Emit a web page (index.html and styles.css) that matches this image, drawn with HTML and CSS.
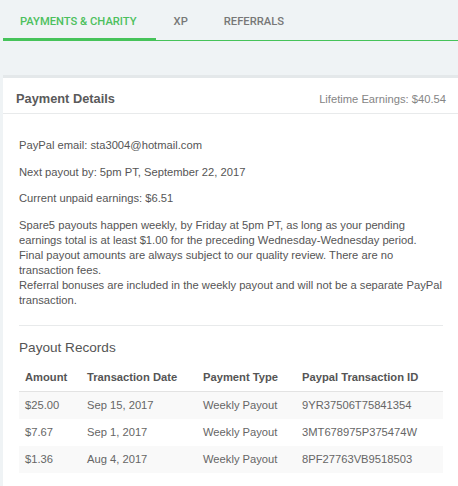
FILE: index.html
```html
<!DOCTYPE html>
<html>
<head>
<meta charset="utf-8">
<link rel="stylesheet" href="styles.css">
</head>
<body>
<nav class="tabs">
  <div class="tab active">PAYMENTS &amp; CHARITY</div>
  <div class="tab">XP</div>
  <div class="tab">REFERRALS</div>
</nav>
<section class="card">
  <header class="card-head">
    <h2 class="card-title">Payment Details</h2>
    <span class="lifetime">Lifetime Earnings: $40.54</span>
  </header>
  <div class="card-body">
    <p>PayPal email: sta3004@hotmail.com</p>
    <p>Next payout by: 5pm PT, September 22, 2017</p>
    <p>Current unpaid earnings: $6.51</p>
    <p class="last">Spare5 payouts happen weekly, by Friday at 5pm PT, as long as your pending earnings total is at least $1.00 for the preceding Wednesday-Wednesday period. Final payout amounts are always subject to our quality review. There are no transaction fees.<br>Referral bonuses are included in the weekly payout and will not be a separate PayPal transaction.</p>
    <hr class="divider">
    <h3 class="records-title">Payout Records</h3>
    <table class="records">
      <thead>
        <tr><th class="c1">Amount</th><th class="c2">Transaction Date</th><th class="c3">Payment Type</th><th class="c4">Paypal Transaction ID</th></tr>
      </thead>
      <tbody>
        <tr><td>$25.00</td><td>Sep 15, 2017</td><td>Weekly Payout</td><td>9YR37506T75841354</td></tr>
        <tr><td>$7.67</td><td>Sep 1, 2017</td><td>Weekly Payout</td><td>3MT678975P375474W</td></tr>
        <tr><td>$1.36</td><td>Aug 4, 2017</td><td>Weekly Payout</td><td>8PF27763VB9518503</td></tr>
      </tbody>
    </table>
  </div>
</section>
</body>
</html>
```

FILE: styles.css
```css
html, body {
  margin: 0;
  padding: 0;
  background: #eff3f5;
  height: 100%;
}
body {
  font-family: "Liberation Sans", Arial, sans-serif;
  font-size: 11.2px;
  color: #555;
  overflow: hidden;
}
.tabs {
  display: flex;
  height: 40px;
  margin-left: 3px;
  border-bottom: 1px solid #46c35a;
}
.tab {
  font-family: Roboto, "Liberation Sans", sans-serif;
  font-weight: 500;
  font-size: 11.2px;
  color: #777;
  height: 41px;
  box-sizing: border-box;
  padding: 1px 18px 0 18px;
  display: flex;
  align-items: center;
}
.tab.active {
  color: #4cc05d;
  border-bottom: 3px solid #46c35a;
  margin-bottom: -1px;
  padding: 4px 19px 0 17px;
}
.card {
  margin: 34px 0 0 3px;
  background: #fff;
  border-top: 3px solid #e4e8ea;
  min-height: 420px;
}
.card-head {
  display: flex;
  justify-content: space-between;
  align-items: baseline;
  padding: 11px 12px 4px 13px;
  border-bottom: 1px solid #e8eaeb;
}
.card-title {
  margin: 0;
  font-size: 12.8px;
  line-height: 20px;
  font-weight: bold;
  color: #5a5a5a;
}
.lifetime {
  color: #858585;
  font-size: 11.2px;
}
.card-body {
  padding: 24px 15px 0 16px;
}
.card-body p {
  margin: 0 0 11.5px;
  line-height: 15px;
}
.card-body p.last {
  margin-bottom: 0;
}
.divider {
  border: 0;
  border-top: 1px solid #e8eaeb;
  margin: 17.5px 0 12px;
}
.records-title {
  margin: 0 0 6px;
  font-size: 13.6px;
  line-height: 20px;
  font-weight: normal;
  color: #555;
}
.records {
  width: 100%;
  border-collapse: collapse;
  table-layout: fixed;
}
.records th, .records td {
  text-align: left;
  padding: 6px 6px;
  line-height: 15px;
  white-space: nowrap;
}
.records th {
  font-weight: bold;
  color: #555;
  border-bottom: 1px solid #e3e3e3;
}
.records td {
  color: #666;
}
.records tbody tr:nth-child(odd) {
  background: #f9f9f9;
}
.c1 { width: 50px; }
.c2 { width: 104px; }
.c3 { width: 87px; }
```
